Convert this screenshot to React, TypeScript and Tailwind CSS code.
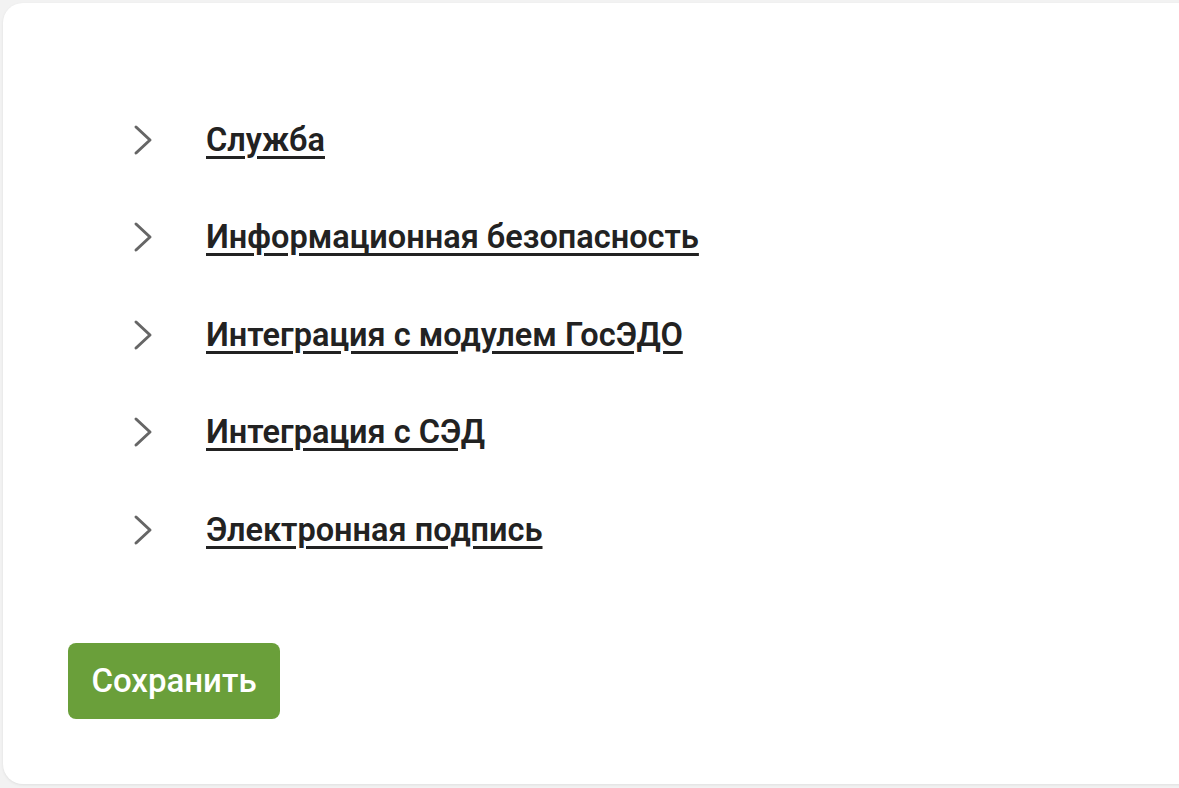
import React from "react";

const items = [
  "Служба",
  "Информационная безопасность",
  "Интеграция с модулем ГосЭДО",
  "Интеграция с СЭД",
  "Электронная подпись",
];

function Chevron() {
  return (
    <svg width="20" height="32" viewBox="0 0 20 32" fill="none" className="shrink-0">
      <path d="M3 3 L17 16 L3 29" stroke="#666666" strokeWidth="3" strokeLinecap="round" strokeLinejoin="round" />
    </svg>
  );
}

export default function App() {
  return (
    <div className="min-h-[788px] w-[1179px] overflow-hidden bg-[#f2f2f2] pl-[3px] pt-[3px]" style={{ fontFamily: "Roboto, 'Noto Sans', sans-serif" }}>
      <div className="w-[1220px] h-[781px] rounded-[20px] bg-white shadow-[0_1px_3px_rgba(0,0,0,0.08)] pl-[65px] pt-[88px]">
        <ul className="pl-[65px]">
          {items.map((t) => (
            <li key={t} className="flex h-[97.5px] items-center">
              <Chevron />
              <a className="ml-[53px] text-[32.5px] font-semibold leading-none text-[#222222] underline decoration-[3px] underline-offset-[5px] cursor-pointer">
                {t}
              </a>
            </li>
          ))}
        </ul>
        <button className="mt-[64px] flex h-[76px] w-[212px] items-center justify-center rounded-[8px] bg-[#6a9f3a] text-[33px] font-medium text-white">
          Сохранить
        </button>
      </div>
    </div>
  );
}
